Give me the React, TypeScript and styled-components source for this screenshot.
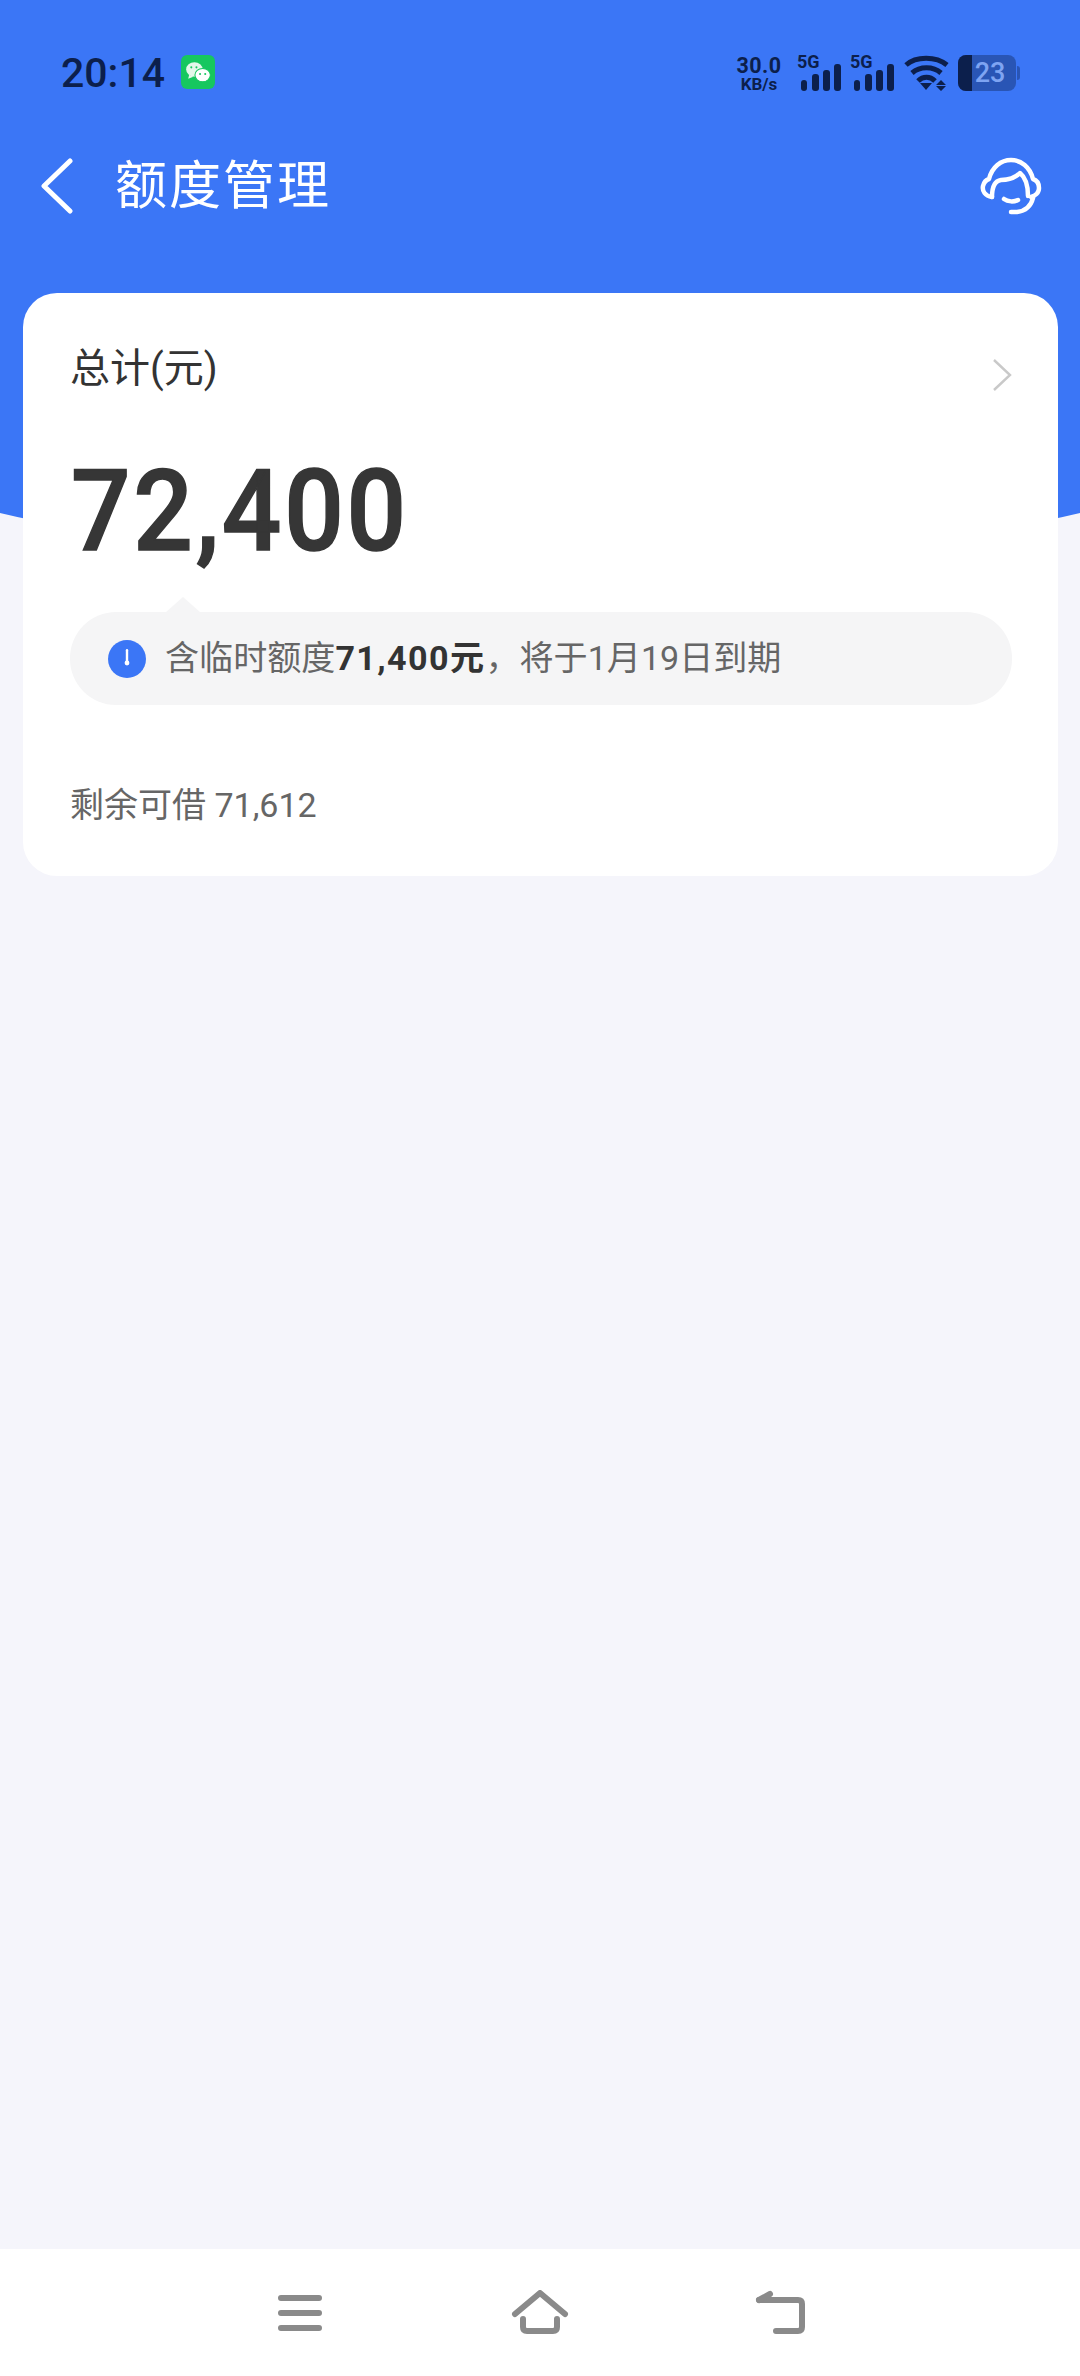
import React from 'react'
import styled, { createGlobalStyle } from 'styled-components'

const GlobalStyle = createGlobalStyle`
  html, body {
    margin: 0;
    padding: 0;
    background: #f5f5fb;
    font-family: Roboto, "Noto Sans CJK SC", sans-serif;
  }
`

const Screen = styled.div`
  position: relative;
  width: 1080px;
  height: 2376px;
  overflow: hidden;
  display: flex;
  flex-direction: column;
  background: #f5f5fb;

  &::before {
    content: '';
    position: absolute;
    top: 0;
    left: -110px;
    width: 1300px;
    height: 560px;
    background: #3b76f6;
    border-radius: 0 0 650px 650px / 0 0 106px 106px;
  }
`

const StatusBar = styled.div`
  position: relative;
  height: 146px;
  flex: none;
  display: flex;
  align-items: center;
  padding: 0 60px 0 61px;
  color: #0c1f4c;
`

const Clock = styled.span`
  font-size: 41px;
  font-weight: 500;
  line-height: 1;
`

const AppBadge = styled.svg`
  margin-left: 16px;
  margin-top: -2px;
  width: 34px;
  height: 34px;
`

const StatusIcons = styled.div`
  margin-left: auto;
  display: flex;
  align-items: center;
`

const NetSpeed = styled.div`
  width: 48px;
  display: flex;
  flex-direction: column;
  align-items: center;
  font-weight: 700;
`

const SpeedValue = styled.span`
  font-size: 21.5px;
  line-height: 21px;
  letter-spacing: 0.5px;
`

const SpeedUnit = styled.span`
  font-size: 17px;
  line-height: 16px;
`

const Signal = styled.div`
  position: relative;
  width: 44px;
  height: 36px;
  margin-left: ${p => p.$gap}px;
`

const SignalLabel = styled.span`
  position: absolute;
  left: -1px;
  top: -1px;
  font-size: 18px;
  font-weight: 700;
  line-height: 15px;
`

const SignalBars = styled.svg`
  display: block;
  width: 44px;
  height: 36px;
`

const Wifi = styled.svg`
  margin-left: 9px;
  width: 46px;
  height: 36px;
`

const Battery = styled.div`
  position: relative;
  margin-left: 8px;
  width: 58px;
  height: 36px;
  display: flex;
  border-radius: 8px;
  overflow: hidden;
  background: rgba(12, 31, 76, 0.38);
`

const BatteryFill = styled.div`
  width: 14px;
  background: #0c1f4c;
`

const BatteryLevel = styled.span`
  flex: 1;
  text-align: center;
  padding-right: 8px;
  font-size: 27px;
  font-weight: 500;
  line-height: 36px;
  color: #7ea4f2;
`

const BatteryCap = styled.div`
  width: 3px;
  height: 14px;
  margin-left: 1px;
  border-radius: 0 3px 3px 0;
  background: rgba(12, 31, 76, 0.38);
`

const Header = styled.div`
  position: relative;
  height: 80px;
  flex: none;
  display: flex;
  align-items: center;
  padding: 0 38px 0 40px;
  color: #fff;
`

const BackIcon = styled.svg`
  width: 34px;
  height: 56px;
`

const Title = styled.h1`
  margin: 2px 0 0 41px;
  font-size: 52px;
  font-weight: 400;
  line-height: 80px;
  letter-spacing: 2px;
`

const SupportIcon = styled.svg`
  margin-left: auto;
  width: 62px;
  height: 58px;
`

const Card = styled.section`
  position: relative;
  margin: 67px 22px 0 23px;
  padding: 50px 46px 44px 47px;
  background: #fff;
  border-radius: 34px;
`

const CardHead = styled.div`
  height: 56px;
  display: flex;
  align-items: center;
  justify-content: space-between;
`

const CardLabel = styled.span`
  font-size: 40px;
  line-height: 52px;
  margin-top: -4px;
  color: #333;
`

const Chevron = styled.svg`
  width: 20px;
  height: 32px;
  margin-top: 7px;
`

const Amount = styled.div`
  margin-top: 62px;
  padding-left: 1px;
  font-size: 114px;
  font-weight: 500;
  line-height: 100px;
  letter-spacing: 3px;
  color: #363636;
  -webkit-text-stroke: 1.5px #363636;
  transform: scaleX(0.92);
  transform-origin: left center;
`

const Notice = styled.div`
  position: relative;
  margin-top: 51px;
  height: 93px;
  display: flex;
  align-items: center;
  padding-left: 38px;
  border-radius: 46px;
  background: #f5f5f6;

  &::before {
    content: '';
    position: absolute;
    left: 95px;
    top: -15px;
    width: 0;
    height: 0;
    border-left: 18px solid transparent;
    border-right: 18px solid transparent;
    border-bottom: 16px solid #f5f5f6;
  }
`

const NoticeIcon = styled.svg`
  flex: none;
  width: 38px;
  height: 38px;
`

const NoticeText = styled.span`
  margin: -7px 0 0 19px;
  font-size: 34.1px;
  color: #666;
  white-space: nowrap;
`

const NoticeStrong = styled.b`
  font-weight: 700;
  letter-spacing: 1.4px;
  color: #333;
`

const Remaining = styled.div`
  margin-top: 75px;
  padding-bottom: 2px;
  font-size: 34px;
  line-height: 50px;
  color: #666;
`

const NavBar = styled.nav`
  position: relative;
  margin-top: auto;
  height: 127px;
  flex: none;
  display: grid;
  grid-template-columns: repeat(3, 60px);
  justify-content: center;
  column-gap: 180px;
  align-items: start;
  justify-items: center;
  padding-top: 41px;
  box-sizing: border-box;
  background: #fff;
`

const NavIcon = styled.svg`
  width: 60px;
  height: 48px;
  fill: none;
  stroke: #8a8a8a;
  stroke-width: 6;
  stroke-linecap: round;
  stroke-linejoin: round;
`

function SignalIcon() {
  return (
    <SignalBars viewBox="0 0 44 36">
      <rect x="3" y="25" width="6" height="11" rx="3" fill="#0c1f4c" />
      <rect x="14" y="19" width="7" height="17" rx="3" fill="#0c1f4c" />
      <rect x="25" y="15" width="7" height="21" rx="3" fill="#0c1f4c" />
      <rect x="36" y="9" width="7" height="27" rx="3" fill="#0c1f4c" />
    </SignalBars>
  )
}

export default function App() {
  return (
    <Screen>
      <GlobalStyle />
      <StatusBar>
        <Clock>20:14</Clock>
        <AppBadge viewBox="0 0 33 33">
          <rect width="33" height="33" rx="6" fill="#16c75f" />
          <ellipse cx="13" cy="14" rx="8" ry="7" fill="#e4f7ea" />
          <path d="M8 19l-1 4 5-2z" fill="#e4f7ea" />
          <ellipse cx="21" cy="19.5" rx="7.5" ry="6.5" fill="#fff" stroke="#16c75f" />
          <circle cx="18.5" cy="18.5" r="1" fill="#16c75f" />
          <circle cx="23.5" cy="18.5" r="1" fill="#16c75f" />
          <circle cx="10" cy="12" r="1" fill="#16c75f" />
          <circle cx="15" cy="12" r="1" fill="#16c75f" />
        </AppBadge>
        <StatusIcons>
          <NetSpeed>
            <SpeedValue>30.0</SpeedValue>
            <SpeedUnit>KB/s</SpeedUnit>
          </NetSpeed>
          <Signal $gap={15}>
            <SignalLabel>5G</SignalLabel>
            <SignalIcon />
          </Signal>
          <Signal $gap={9}>
            <SignalLabel>5G</SignalLabel>
            <SignalIcon />
          </Signal>
          <Wifi viewBox="0 0 46 36">
            <g fill="none" stroke="#0c1f4c" strokeWidth="5">
              <path d="M2 10C12 1 32 1 43 10" />
              <path d="M8 18C16 11 29 11 37 18" />
              <path d="M14 26C19 21 26 21 31 26" />
            </g>
            <path d="M16 28h12l-6 7z" fill="#0c1f4c" />
            <path d="M37 25l-5 5h10zM37 36l-5-5h10z" fill="#0c1f4c" />
          </Wifi>
          <Battery>
            <BatteryFill />
            <BatteryLevel>23</BatteryLevel>
          </Battery>
          <BatteryCap />
        </StatusIcons>
      </StatusBar>

      <Header>
        <BackIcon viewBox="0 0 34 56" fill="none" stroke="#fff" strokeWidth="5" strokeLinecap="round" strokeLinejoin="round">
          <path d="M30 3L4 28l26 25" />
        </BackIcon>
        <Title>额度管理</Title>
        <SupportIcon viewBox="0 0 62 58" fill="none" stroke="#fff" strokeWidth="4.5" strokeLinecap="round" strokeLinejoin="round">
          <path d="M12 40C5 39 2 34 3 29C4 25 6 23 9 22C12 10 21 3 31 3C41 3 50 10 53 22C56 23 59 26 59 31C59 36 55 39 51 40" />
          <path d="M12 40C12 31 14 24 21 23C29 23 35 21 40 16C45 20 48 26 48 39" />
          <path d="M24 42C28 45 34 45 38 43" />
          <path d="M53 41C51 49 45 54 37 55L31 55" />
        </SupportIcon>
      </Header>

      <Card>
        <CardHead>
          <CardLabel>总计(元)</CardLabel>
          <Chevron viewBox="0 0 20 32" fill="none" stroke="#c9c9c9" strokeWidth="2.4">
            <path d="M2 1l16 15L2 31" />
          </Chevron>
        </CardHead>
        <Amount>72,400</Amount>
        <Notice>
          <NoticeIcon viewBox="0 0 38 38">
            <circle cx="19" cy="19" r="19" fill="#3b76f6" />
            <rect x="17.8" y="9" width="2.4" height="14" rx="1.2" fill="#fff" />
            <circle cx="19" cy="23" r="2.4" fill="#fff" />
          </NoticeIcon>
          <NoticeText>
            含临时额度<NoticeStrong>71,400元</NoticeStrong>，将于1月19日到期
          </NoticeText>
        </Notice>
        <Remaining>剩余可借 71,612</Remaining>
      </Card>

      <NavBar>
        <NavIcon viewBox="0 0 60 48">
          <path d="M11 8h38M11 23h38M11 38h38" />
        </NavIcon>
        <NavIcon viewBox="0 0 60 48">
          <path d="M5 24L30 3l25 21" />
          <path d="M13 29v8q0 4 4 4h26q4 0 4-4v-8" />
        </NavIcon>
        <NavIcon viewBox="0 0 60 48">
          <path d="M9 10h39q4 0 4 4v23q0 4-4 4H26" />
          <path d="M9 10l11-6" />
        </NavIcon>
      </NavBar>
    </Screen>
  )
}
